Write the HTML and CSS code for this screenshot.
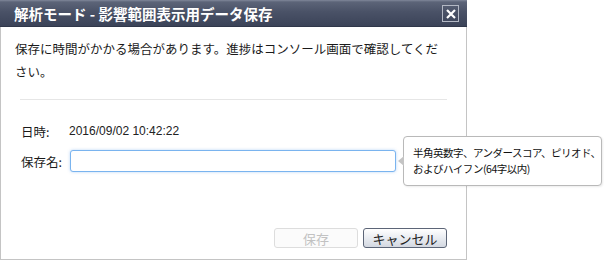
FILE: index.html
```html
<!DOCTYPE html>
<html>
    <head>
        <meta charset="utf-8">
        <link rel="stylesheet" href="styles.css">
    </head>
    <body>
        <div class="dialog">
            <div class="titlebar">
                <h1>解析モード - 影響範囲表示用データ保存</h1>
                <span class="close">
                    <svg width="10" height="10" viewBox="0 0 10 10"><path d="M1 1L9 9M9 1L1 9" stroke="#fff" stroke-width="2.2"/></svg>
                </span>
            </div>
            <div class="content">
                <p class="message">保存に時間がかかる場合があります。進捗はコンソール画面で確認してください。</p>
                <hr class="sep">
                <div class="row">
                    <span class="label">日時:</span>
                    <span class="value">2016/09/02 10:42:22</span>
                </div>
                <div class="row">
                    <span class="label">保存名:</span>
                    <input class="nameinput" type="text">
                </div>
            </div>
            <div class="buttons">
                <button class="btn" disabled>保存</button>
                <button class="btn cancel">キャンセル</button>
            </div>
            <div class="tooltip">半角英数字、アンダースコア、ピリオド、<br>およびハイフン(64字以内)</div>
        </div>
    </body>
</html>
```
FILE: styles.css
```css
body{
    margin: 0;
    background: white;
    font-family: "Noto Sans CJK JP", "Liberation Sans", sans-serif;
    color: #1a1a1a;
}
.dialog{
    position: relative;
    width: 465px;
    height: 259px;
    border: 1px solid #c4c4c4;
    border-top: 0;
    box-shadow: 0 3px 0 #e4e4e4;
    background: white;
    display: flex;
    flex-direction: column;
}
.titlebar{
    height: 27px;
    margin: 0 -1px;
    display: flex;
    align-items: center;
    justify-content: space-between;
    padding: 0 8px 0 14px;
    background: linear-gradient(#80879a 0, #5c6478 2px, #4a5267 45%, #3b4358 100%);
    border-bottom: 1px solid #30374a;
    box-sizing: border-box;
}
h1{
    margin: 0;
    color: white;
    font-size: 14.5px;
    font-weight: bold;
    line-height: 27px;
}
.close{
    width: 15px;
    height: 15px;
    border: 1px solid #b3b8c4;
    display: flex;
    align-items: center;
    justify-content: center;
    margin-top: 1px;
}
.content{
    padding: 10px 19px 0 14px;
}
.message{
    margin: 0;
    font-size: 12.5px;
    line-height: 23px;
}
.sep{
    border: 0;
    border-top: 1px solid #e6e6e6;
    margin: 16px 0 0 5px;
}
.row{
    display: flex;
    align-items: center;
    padding-left: 6px;
    font-size: 12.5px;
}
.row:first-of-type{
    margin-top: 21px;
    height: 20px;
}
.row + .row{
    margin-top: 9px;
}
.label{
    width: 48px;
}
.value{
    font-family: "Liberation Sans", sans-serif;
    font-size: 12px;
    color: #222;
}
.nameinput{
    width: 326px;
    height: 22px;
    box-sizing: border-box;
    border: 1px solid #7ab4ef;
    border-radius: 3px;
    box-shadow: 0 0 3px rgba(110,170,240,0.5);
    outline: none;
    margin-left: 1px;
}
.buttons{
    margin-top: auto;
    margin-bottom: 11px;
    display: flex;
    justify-content: flex-end;
    gap: 5px;
    padding-right: 19px;
}
.btn{
    width: 84px;
    height: 20px;
    font-family: inherit;
    font-size: 13px;
    line-height: 1;
    padding: 0;
    border-radius: 3px;
    border: 1px solid #5c6577;
    background: linear-gradient(#ffffff, #e9ecf1 50%, #d3d8e1);
    color: #222;
}
.btn:disabled{
    border-color: #dddddd;
    background: #fbfbfb;
    color: #c2c2c2;
}
.tooltip{
    position: absolute;
    left: 402px;
    top: 136px;
    width: 179px;
    height: 32px;
    padding: 8px 9px 8px 9px;
    background: white;
    border: 1px solid #b9b9b9;
    border-radius: 4px;
    box-shadow: 1px 1px 2px rgba(0,0,0,0.08);
    font-size: 10.5px;
    letter-spacing: -0.5px;
    line-height: 16px;
    color: #111;
    white-space: nowrap;
}
.tooltip::before{
    content: "";
    position: absolute;
    left: -6px;
    top: 19px;
    border-style: solid;
    border-width: 5px 6px 5px 0;
    border-color: transparent #c4c4c4 transparent transparent;
}
```
